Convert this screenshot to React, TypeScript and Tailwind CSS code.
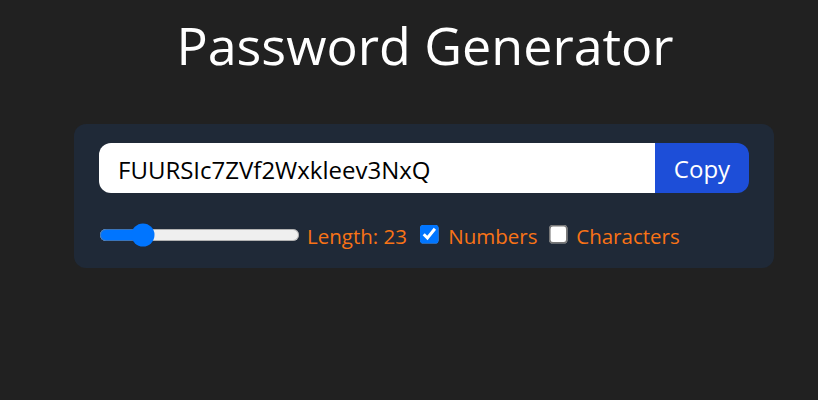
import { useState } from "react";

export default function App() {
  const [length, setLength] = useState(23);
  const [numbers, setNumbers] = useState(true);
  const [chars, setChars] = useState(false);
  const password = "FUURSIc7ZVf2Wxkleev3NxQ";

  return (
    <div
      className="w-full h-[400px] bg-[#212121] pt-[13px] pl-[32px]"
      style={{ fontFamily: '"Open Sans", "Noto Sans", sans-serif' }}
    >
      <h1 className="text-center text-white text-[52px] leading-[64px]">
        Password Generator
      </h1>

      <div className="ml-[42px] mt-[47px] w-[700px] rounded-xl bg-[#1f2937] px-[25px] pt-[19px] pb-[21px]">
        <div className="flex h-[50px] rounded-xl overflow-hidden">
          <input
            type="text"
            readOnly
            value={password}
            className="flex-1 bg-white px-[19px] pt-[3px] text-[24px] text-black outline-none"
          />
          <button className="w-[94px] bg-[#1d4ed8] text-white text-[24px] pt-[2px]">
            Copy
          </button>
        </div>

        <div className="mt-[30px] flex h-[24px] items-center text-[20.5px] text-[#f97316]">
          <input
            type="range"
            min={6}
            max={100}
            value={length}
            onChange={(e) => setLength(Number(e.target.value))}
            className="m-0 w-[134px] cursor-pointer [zoom:1.5]"
          />
          <label className="ml-[7px] pt-[2px]">Length: {length}</label>
          <input
            type="checkbox"
            checked={numbers}
            onChange={() => setNumbers((v) => !v)}
            className="m-0 ml-[8.5px] [zoom:1.55]"
          />
          <label className="ml-[8px] pt-[2px]">Numbers</label>
          <input
            type="checkbox"
            checked={chars}
            onChange={() => setChars((v) => !v)}
            className="m-0 ml-[7.5px] [zoom:1.55]"
          />
          <label className="ml-[7px] pt-[2px]">Characters</label>
        </div>
      </div>
    </div>
  );
}
